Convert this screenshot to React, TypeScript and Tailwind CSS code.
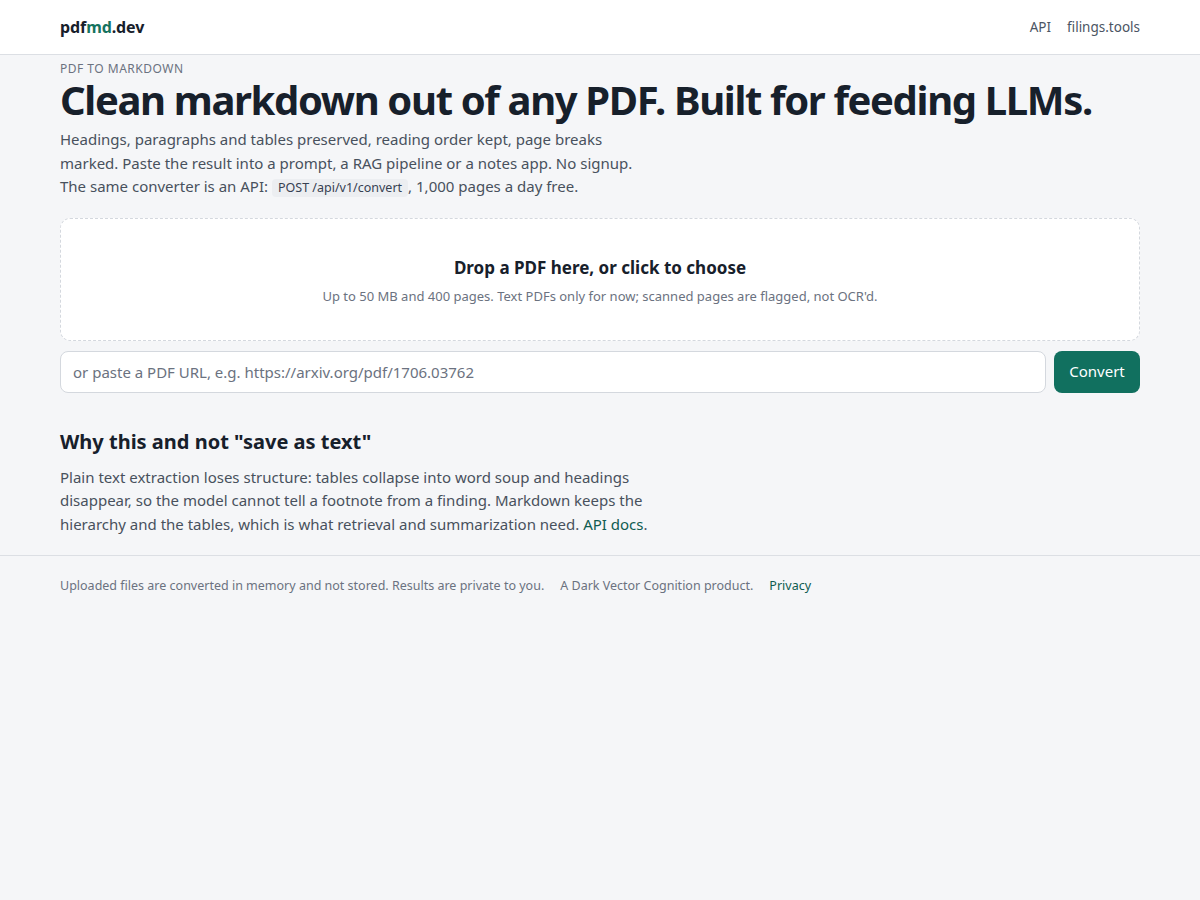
import React, { useState } from 'react';

const App: React.FC = () => {
  const [url, setUrl] = useState('');

  return (
    <div
      className="min-h-screen bg-[#f5f6f8] text-[#17202b]"
      style={{ fontFamily: '"Noto Sans", "Open Sans", sans-serif' }}
    >
      {/* Header */}
      <header className="bg-white border-b border-[#dcdfe4]">
        <div className="max-w-[1080px] mx-auto h-[54px] flex items-center justify-between">
          <a href="#" className="text-[16px] font-bold tracking-[-0.1px] text-[#17202b]">
            pdf<span className="text-[#16735f]">md</span>.dev
          </a>
          <nav className="flex items-center gap-4 text-[13.5px] text-[#4b5563]">
            <a href="#">API</a>
            <a href="#">filings.tools</a>
          </nav>
        </div>
      </header>

      <main className="max-w-[1080px] mx-auto">
        <section className="pt-[6px]">
          <div className="text-[12px] uppercase tracking-[0.5px] text-[#6b7280] leading-[16px]">
            PDF to Markdown
          </div>
          <h1 className="text-[40px] font-bold leading-[46px] tracking-[-1.35px] text-[#17202b]">
            Clean markdown out of any PDF. Built for feeding LLMs.
          </h1>
          <p className="mt-[5px] max-w-[590px] text-[15px] leading-[23.5px] text-[#48515d]">
            Headings, paragraphs and tables preserved, reading order kept, page breaks marked. Paste the
            result into a prompt, a RAG pipeline or a notes app. No signup. The same converter is an API:{' '}
            <code
              className="inline-block leading-[18px] bg-[#eceef1] rounded px-[6px] text-[12.5px] text-[#374151]"
              style={{ fontFamily: '"Noto Sans", sans-serif' }}
            >
              POST /api/v1/convert
            </code>
            , 1,000 pages a day free.
          </p>
        </section>

        {/* Drop zone */}
        <section className="mt-[19px]">
          <label className="flex flex-col items-center justify-center h-[123px] pt-[2px] bg-white border border-dashed border-[#d4d8de] rounded-[10px] cursor-pointer">
            <input type="file" accept="application/pdf" className="hidden" />
            <div className="text-[17px] font-bold text-[#17202b] leading-[24px]">
              Drop a PDF here, or click to choose
            </div>
            <div className="mt-[7px] text-[13px] text-[#6b7280] leading-[18px]">
              Up to 50 MB and 400 pages. Text PDFs only for now; scanned pages are flagged, not OCR'd.
            </div>
          </label>

          <form className="mt-[10px] flex gap-2" onSubmit={(e) => e.preventDefault()}>
            <input
              value={url}
              onChange={(e) => setUrl(e.target.value)}
              placeholder="or paste a PDF URL, e.g. https://arxiv.org/pdf/1706.03762"
              className="flex-1 h-[42px] bg-white border border-[#d4d8de] rounded-[8px] px-3 text-[15px] text-[#17202b] placeholder:text-[#6b7280] outline-none"
            />
            <button
              type="submit"
              className="h-[42px] w-[86px] rounded-[8px] bg-[#11705f] text-white text-[15px]"
            >
              Convert
            </button>
          </form>
        </section>

        {/* Why */}
        <section className="mt-[35px] pb-[19px]">
          <h2 className="text-[20px] font-bold leading-[28px] text-[#17202b]">
            Why this and not "save as text"
          </h2>
          <p className="mt-[10px] max-w-[600px] text-[15px] leading-[23.5px] text-[#48515d]">
            Plain text extraction loses structure: tables collapse into word soup and headings disappear, so
            the model cannot tell a footnote from a finding. Markdown keeps the hierarchy and the tables,
            which is what retrieval and summarization need.{' '}
            <a href="#" className="text-[#0f5c50]">API docs</a>.
          </p>
        </section>
      </main>

      {/* Footer */}
      <footer className="border-t border-[#dcdfe4]">
        <div className="max-w-[1080px] mx-auto pt-[21px] pb-[24px] flex items-center gap-4 text-[12.5px] text-[#6b7280]">
          <span>Uploaded files are converted in memory and not stored. Results are private to you.</span>
          <span>A Dark Vector Cognition product.</span>
          <a href="#" className="text-[#0f5c50]">Privacy</a>
        </div>
      </footer>
    </div>
  );
};

export default App;
